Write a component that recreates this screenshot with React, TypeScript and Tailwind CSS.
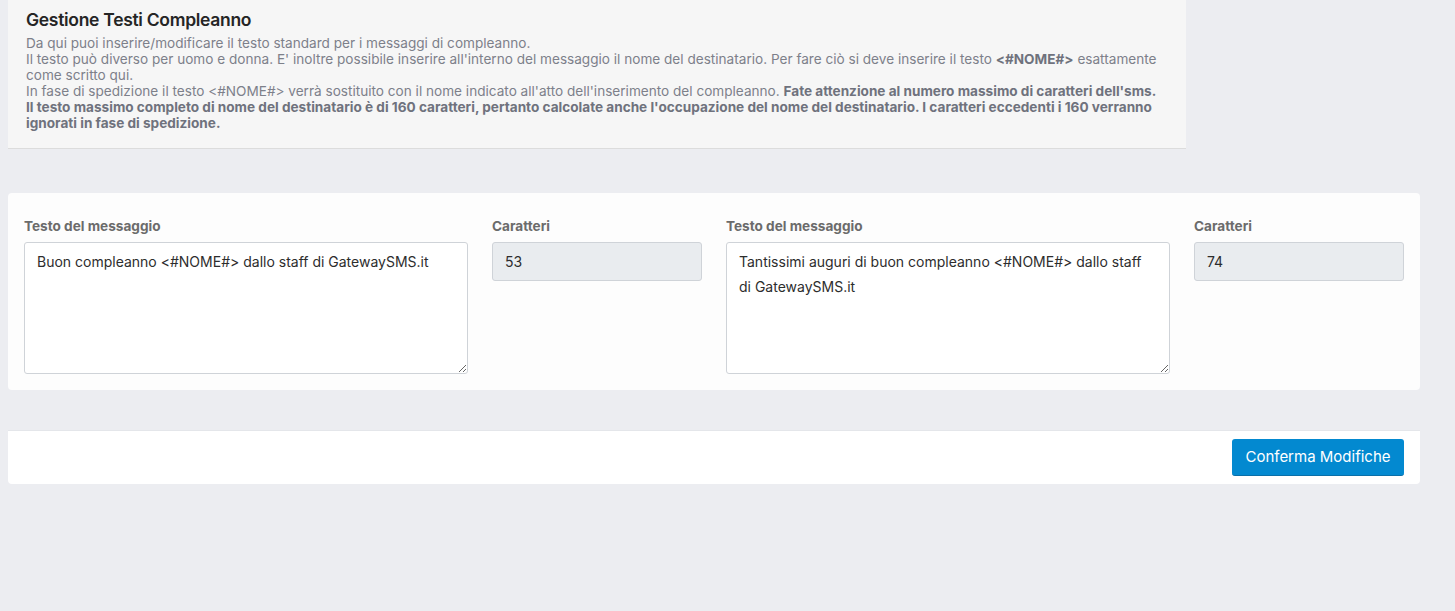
import React from "react";

const font = { fontFamily: "Inter, 'DejaVu Sans', sans-serif" };

function MessageField({ text, count }: { text: string; count: number }) {
  return (
    <>
      <div className="col-span-4 flex flex-col">
        <label className="mb-[7px] text-[13.6px] font-bold leading-[18px] text-[#6b6b6b]">Testo del messaggio</label>
        <textarea
          defaultValue={text}
          className="h-[132px] w-full rounded-[3px] border border-[#cfd3d8] bg-white px-3 py-[6px] text-[14px] leading-[25px] text-[#2d2d2d] outline-none"
        />
      </div>
      <div className="col-span-2 flex flex-col">
        <label className="mb-[7px] text-[13.6px] font-bold leading-[18px] text-[#6b6b6b]">Caratteri</label>
        <input
          readOnly
          value={count}
          className="h-[39px] w-full rounded-[3px] border border-[#cfd3d8] bg-[#e9ecef] px-3 text-[14px] text-[#2d2d2d] outline-none"
        />
      </div>
    </>
  );
}

export default function App() {
  return (
    <div className="min-h-[611px] bg-[#ecedf1] px-2" style={font}>
      <div className="w-[1178px] border-b border-[#dcdcdc] bg-[#f6f6f6] pl-[18px] pr-4 pt-[9px] pb-[17px]">
        <h1 className="text-[17.5px] font-semibold leading-[22px] tracking-[-0.3px] text-[#252525]">Gestione Testi Compleanno</h1>
        <div className="mt-[4px] text-[13.6px] leading-[16px] text-[#7d808a]">
          <p className="whitespace-nowrap">Da qui puoi inserire/modificare il testo standard per i messaggi di compleanno.</p>
          <p className="whitespace-nowrap">
            Il testo può diverso per uomo e donna. E' inoltre possibile inserire all'interno del messaggio il nome del destinatario. Per fare ciò si deve inserire il testo{" "}
            <b className="font-bold text-[#6f727d]">&lt;#NOME#&gt;</b> esattamente
          </p>
          <p>come scritto qui.</p>
          <p className="whitespace-nowrap">
            In fase di spedizione il testo &lt;#NOME#&gt; verrà sostituito con il nome indicato all'atto dell'inserimento del compleanno.{" "}
            <b className="font-bold text-[#6f727d]">Fate attenzione al numero massimo di caratteri dell'sms.</b>
          </p>
          <p className="whitespace-nowrap font-bold text-[#6f727d]">
            Il testo massimo completo di nome del destinatario è di 160 caratteri, pertanto calcolate anche l'occupazione del nome del destinatario. I caratteri eccedenti i 160 verranno
          </p>
          <p className="font-bold text-[#6f727d]">ignorati in fase di spedizione.</p>
        </div>
      </div>

      <div className="mt-[44px] w-[1412px] rounded-[4px] bg-[#fdfdfd] px-4 pt-[24px] pb-4">
        <div className="grid grid-cols-12 gap-x-6">
          <MessageField text="Buon compleanno <#NOME#> dallo staff di GatewaySMS.it" count={53} />
          <MessageField text="Tantissimi auguri di buon compleanno <#NOME#> dallo staff di GatewaySMS.it" count={74} />
        </div>
      </div>

      <div className="mt-[40px] flex w-[1412px] justify-end rounded-b-[4px] border-t border-[#e4e6ea] bg-white px-4 py-2">
        <button className="h-[37px] w-[172px] rounded-[3px] border-b border-[#0a6fa8] bg-[#0389d0] text-[15px] text-white">
          Conferma Modifiche
        </button>
      </div>
    </div>
  );
}
